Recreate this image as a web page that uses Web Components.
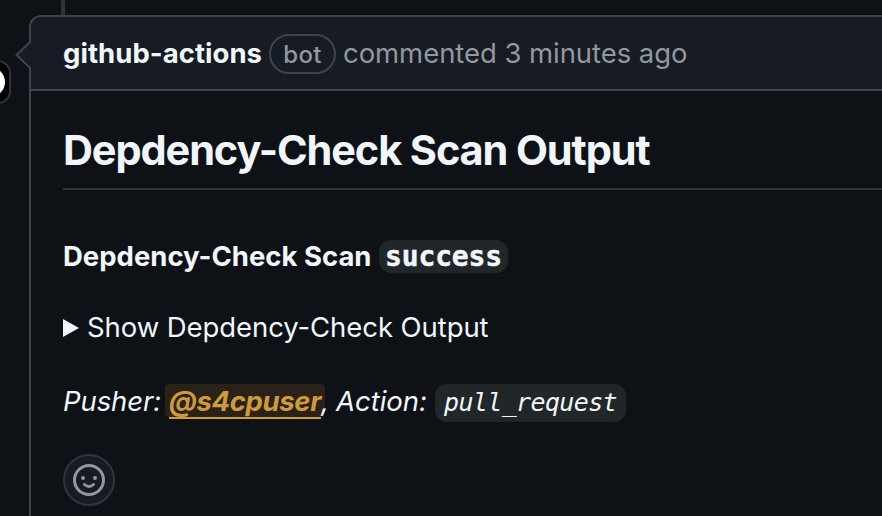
<!DOCTYPE html>
<html lang="en"><head><meta charset="utf-8"><title>Comment</title>
<style>
html,body{margin:0;height:516px;overflow:hidden;background:#0e1116}
body{font-family:Inter,"Liberation Sans",sans-serif;color:#f0f6fc}
</style></head><body>
<timeline-item>
  <comment-card>
    <comment-header slot="header"><fit-text slot="author" width="199">github-actions</fit-text><fit-text slot="badge" width="38.5">bot</fit-text><fit-text slot="time" width="344.5">commented 3 minutes ago</fit-text></comment-header>
    <comment-title><fit-text width="586.5">Depdency-Check Scan Output</fit-text></comment-title>
    <comment-row class="scan"><fit-text width="308.5">Depdency-Check Scan</fit-text><code-chip strong><fit-text width="117">success</fit-text></code-chip></comment-row>
    <disclosure-row><fit-text class="high" width="401.5">Show Depdency-Check Output</fit-text></disclosure-row>
    <comment-row class="push"><fit-text class="high" width="98">Pusher:</fit-text><user-mention><fit-text width="152">@s4cpuser</fit-text></user-mention><fit-text class="comma high" width="7">,</fit-text><fit-text class="high" width="91">Action:</fit-text><code-chip><fit-text width="173">pull_request</fit-text></code-chip></comment-row>
    <reaction-button></reaction-button>
  </comment-card>
</timeline-item>
<script>
const define=(name,html,init)=>customElements.define(name,class extends HTMLElement{
  constructor(){super();const t=document.createElement('template');t.innerHTML=html;
    this.attachShadow({mode:'open'}).append(t.content.cloneNode(true));}
  connectedCallback(){if(init)init(this);}
});
define('timeline-item',`<style>
:host{display:block;position:relative;width:882px;height:516px;padding:15px 0 0 29px;box-sizing:border-box;overflow:hidden}
.rail{position:absolute;left:61px;top:0;width:4px;height:15px;background:#2f343b}
.avatar{position:absolute;left:-42px;top:60px;width:53px;height:44px;box-sizing:border-box;border:2px solid #30353b;border-radius:13px;background:#000}
.avatar i{position:absolute;right:4px;top:5px;width:30px;height:30px;border-radius:50%;background:#fff}
</style><div class="rail"></div><div class="avatar"><i></i></div><slot></slot>`);
define('comment-card',`<style>
:host{display:block;position:relative;width:900px;height:560px;border:2px solid #3d444d;border-radius:12px;box-sizing:border-box}
.body{display:flex;flex-direction:column;align-items:flex-start;padding-left:32px}
svg{position:absolute;left:-16px;top:22px}
</style><slot name="header"></slot><svg width="18" height="32" viewBox="0 0 18 32"><path d="M17 2 1.5 16 17 30" fill="#171b23"/><path d="M15 3 1.5 16 15 29" fill="none" stroke="#3d444d" stroke-width="2"/></svg><div class="body"><slot></slot></div>`);
define('comment-header',`<style>
:host{display:flex;align-items:center;height:72px;padding-left:32px;background:#171b23;border-bottom:2px solid #3d444d;border-radius:10px 0 0 0;color:#9198a1;font-size:27.5px;white-space:nowrap}
.author{color:#f0f6fc;font-weight:650}
.badge{display:flex;align-items:center;justify-content:center;box-sizing:border-box;width:67px;height:40px;padding-top:2px;margin:2px 7px 0 7px;border:2px solid #3d444d;border-radius:20px;font-size:24px;font-weight:500}
</style><span class="author"><slot name="author"></slot></span><span class="badge"><slot name="badge"></slot></span><span class="time"><slot name="time"></slot></span>`);
define('comment-title',`<style>
:host{display:flex;align-items:center;box-sizing:border-box;width:850px;height:69px;margin-top:30px;padding-bottom:8px;border-bottom:2px solid #30353b;font-size:41.5px;font-weight:650}
</style><slot></slot>`);
define('comment-row',`<style>
:host{display:flex;align-items:center;height:40px;font-size:27.5px}
:host(.scan){margin-top:46px;font-weight:650;gap:7.5px}
:host(.push){margin-top:34px;font-style:italic}
</style><slot></slot>`);
define('code-chip',`<style>
:host{display:flex;align-items:center;box-sizing:border-box;height:38px;padding:0 9px;margin:2px 0 0 8px;border-radius:12px;background:#212629;font-family:"DejaVu Sans Mono",monospace;font-size:25px}
:host([strong]){height:33px;padding:1px 6px 0;margin:0;font-size:28px;font-weight:600;-webkit-text-stroke:.45px currentColor}
</style><slot></slot>`);
define('user-mention',`<style>
:host{display:flex;align-items:center;box-sizing:border-box;width:160px;height:33px;padding:1px 4px 0;margin:0 -4px 3px 4px;border-radius:4px;background:#2a2118;color:#cf9a3b;font-weight:650;position:relative}
i{position:absolute;left:4px;top:33px;width:152px;height:2px;background:#cf9a3b}
</style><slot></slot><i></i>`);
define('disclosure-row',`<style>
:host{display:flex;align-items:center;gap:8px;height:40px;margin-top:32px;font-size:27.5px}
</style><svg width="16" height="18"><path d="M0 0 16 9 0 18Z" fill="#f0f6fc"/></svg><slot></slot>`);
define('reaction-button',`<style>
:host{display:flex;align-items:center;justify-content:center;box-sizing:border-box;width:52px;height:52px;margin-top:32px;border:2px solid #2f363e;border-radius:50%;background:#171b23}
</style><svg width="32" height="32" viewBox="0 0 32 32" fill="none" stroke="#9198a1"><circle cx="16" cy="16" r="14.5" stroke-width="3"/><path d="M11.5 20.5Q16 24.5 20.5 20.5" stroke-width="3" stroke-linecap="round"/><g fill="#9198a1" stroke="none"><circle cx="10" cy="14" r="2"/><circle cx="22" cy="14" r="2"/></g></svg>`);
define('fit-text',`<style>
:host{display:block;flex:none;white-space:nowrap;line-height:1.2}
span{display:inline-block}
:host(.comma){margin-right:8px;position:relative;z-index:1}
:host(.high){padding-bottom:2px}
</style><span><slot></slot></span>`,el=>{
  const width=+el.getAttribute('width'),span=el.shadowRoot.querySelector('span');
  span.style.letterSpacing=(width-span.getBoundingClientRect().width)/el.textContent.length+'px';
  el.style.width=width+'px';
});
</script></body></html>
